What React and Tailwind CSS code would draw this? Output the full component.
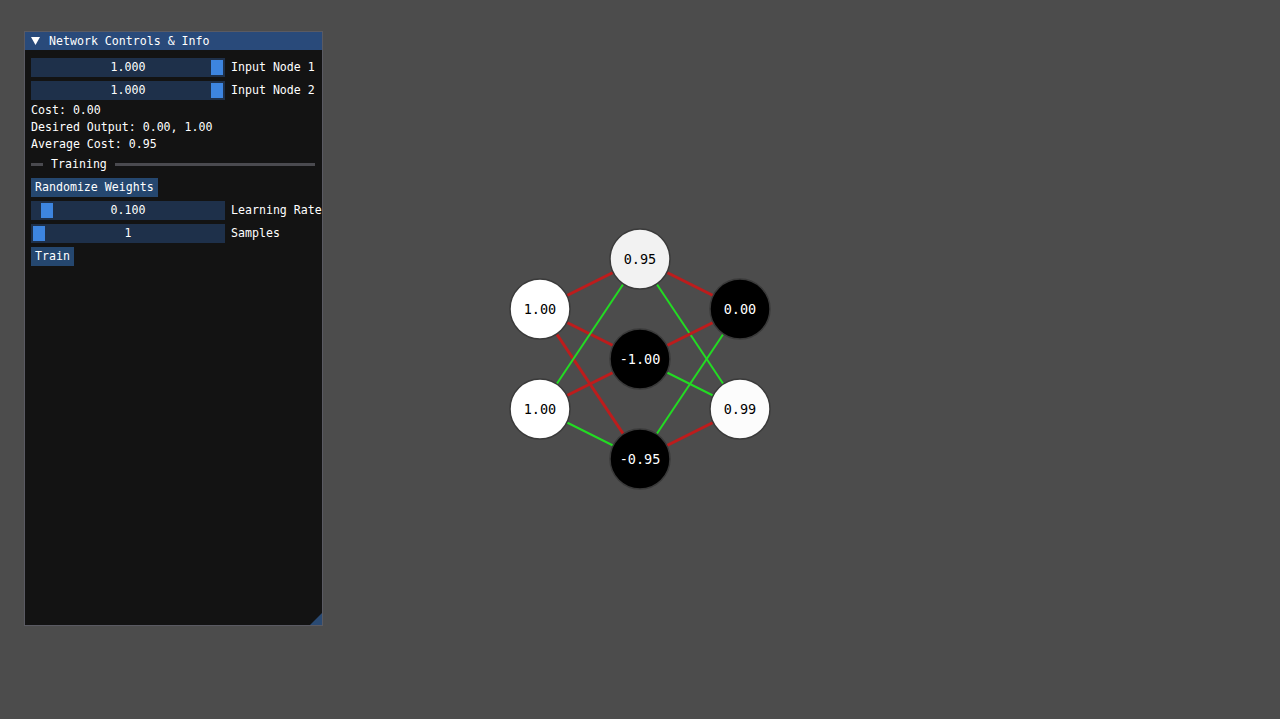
import React from 'react';

const mono = { fontFamily: '"DejaVu Sans Mono", "Liberation Mono", monospace' };

const nodes = {
  l1: { x: 40, y: 89, v: '1.00', fill: '#ffffff', text: '#000' },
  l2: { x: 40, y: 189, v: '1.00', fill: '#ffffff', text: '#000' },
  h1: { x: 140, y: 39, v: '0.95', fill: '#f2f2f2', text: '#000' },
  h2: { x: 140, y: 139, v: '-1.00', fill: '#000000', text: '#fff' },
  h3: { x: 140, y: 239, v: '-0.95', fill: '#000000', text: '#fff' },
  o1: { x: 240, y: 89, v: '0.00', fill: '#000000', text: '#fff' },
  o2: { x: 240, y: 189, v: '0.99', fill: '#fcfcfc', text: '#000' },
};

const links = [
  ['l1', 'h1', 'r'], ['l1', 'h2', 'r'], ['l1', 'h3', 'r'],
  ['l2', 'h1', 'g'], ['l2', 'h2', 'r'], ['l2', 'h3', 'g'],
  ['h1', 'o1', 'r'], ['h1', 'o2', 'g'],
  ['h2', 'o1', 'r'], ['h2', 'o2', 'g'],
  ['h3', 'o1', 'g'], ['h3', 'o2', 'r'],
];

const Slider = ({ value, label, grab }) => (
  <div className="flex items-center gap-[6px] whitespace-nowrap">
    <div className="relative shrink-0 w-[194px] h-[19px] bg-[#1e304a] flex items-center justify-center">
      <div className="absolute top-[2px] h-[15px] w-[12px] bg-[#3d85e0]" style={{ left: grab }} />
      <span className="relative">{value}</span>
    </div>
    <span>{label}</span>
  </div>
);

const Button = ({ children }) => (
  <div className="self-start h-[19px] px-[4px] bg-[#25476f] flex items-center">{children}</div>
);

const Network = () => (
  <svg width="290" height="280" viewBox="0 0 290 280" className="shrink-0 mt-[220px] ml-[177px]">
    {links.map(([a, b, c], i) => (
      <line
        key={i}
        x1={nodes[a].x} y1={nodes[a].y} x2={nodes[b].x} y2={nodes[b].y}
        stroke={c === 'r' ? '#be1c1c' : '#22dd22'}
        strokeWidth={c === 'r' ? 3 : 2}
      />
    ))}
    {Object.entries(nodes).map(([k, n]) => (
      <g key={k}>
        <circle cx={n.x} cy={n.y} r="30" fill={n.fill} stroke="#3a3a3a" strokeWidth="1.5" />
        <text
          x={n.x} y={n.y + 5} textAnchor="middle" fill={n.text}
          fontSize="13.5" style={mono}
        >
          {n.v}
        </text>
      </g>
    ))}
  </svg>
);

export default function App() {
  return (
    <div className="w-full h-[719px] bg-[#4c4c4c] flex items-start overflow-hidden text-white text-[11.6px] leading-[13px]" style={mono}>
      {/* ImGui-style window */}
      <div className="relative shrink-0 ml-[24px] mt-[31px] w-[299px] h-[595px] bg-[#131313] border border-[#5a5a62] flex flex-col">
        <div className="h-[18px] bg-[#294a7a] flex items-center gap-[9px] px-[6px]">
          <svg width="9" height="8" viewBox="0 0 9 8"><path d="M0 0 H9 L4.5 8 Z" fill="#fff" /></svg>
          <span>Network Controls &amp; Info</span>
        </div>
        <div className="flex flex-col gap-[4px] px-[6px] pt-[8px]">
          <Slider value="1.000" label="Input Node 1" grab="180px" />
          <Slider value="1.000" label="Input Node 2" grab="180px" />
          <div>Cost: 0.00</div>
          <div>Desired Output: 0.00, 1.00</div>
          <div>Average Cost: 0.95</div>
          <div className="h-[19px] flex items-center">
            <div className="w-[12px] h-[3px] bg-[#4a4a4f]" />
            <span className="px-[8px]">Training</span>
            <div className="flex-1 h-[3px] bg-[#4a4a4f] mr-[1px]" />
          </div>
          <Button>Randomize Weights</Button>
          <Slider value="0.100" label="Learning Rate" grab="10px" />
          <Slider value="1" label="Samples" grab="2px" />
          <Button>Train</Button>
        </div>
        <svg width="12" height="12" viewBox="0 0 12 12" className="absolute right-0 bottom-0">
          <path d="M12 0 V12 H0 Z" fill="#2a4a73" />
        </svg>
      </div>
      <Network />
    </div>
  );
}
